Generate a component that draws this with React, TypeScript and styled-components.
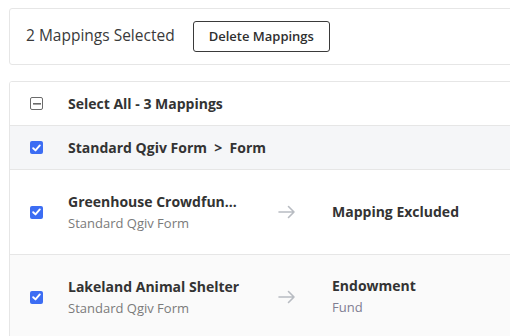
import styled, { createGlobalStyle } from 'styled-components'

const GlobalStyle = createGlobalStyle`
  html, body {
    margin: 0;
    padding: 0;
    background: #ffffff;
    overflow: hidden;
  }
  body {
    font-family: 'Open Sans', Lato, sans-serif;
    color: #333333;
  }
`

const Page = styled.div`
  display: flex;
  flex-direction: column;
  gap: 16px;
  padding: 8px 0 0 9px;
  width: 540px;
`

const Card = styled.div`
  border: 1px solid #e6e6e6;
  border-radius: 3px;
  background: #ffffff;
  overflow: hidden;
`

const Toolbar = styled(Card)`
  display: flex;
  align-items: center;
  gap: 18px;
  height: 55px;
  padding: 0 16px;
`

const SelectedCount = styled.span`
  font-size: 15.5px;
  color: #3a3a3a;
  margin-top: -3px;
`

const Button = styled.button`
  font-family: 'Open Sans', Lato, sans-serif;
  font-size: 13px;
  font-weight: 600;
  color: #2f2f2f;
  background: #ffffff;
  border: 1px solid #3a3a3a;
  border-radius: 3px;
  height: 31px;
  padding: 0 15px;
  margin-top: -1px;
`

const Row = styled.div<{ $bg?: string; $height: number }>`
  display: flex;
  align-items: center;
  height: ${(p) => p.$height}px;
  padding-left: 20px;
  background: ${(p) => p.$bg || '#ffffff'};
  border-bottom: 1px solid #e6e6e6;
  &:last-child {
    border-bottom: none;
  }
`

const Box = styled.span<{ $checked?: boolean }>`
  flex: none;
  width: 13px;
  height: 13px;
  box-sizing: border-box;
  border-radius: 2px;
  display: flex;
  align-items: center;
  justify-content: center;
  margin-right: 25px;
  background: ${(p) => (p.$checked ? '#3c6df3' : '#ffffff')};
  border: ${(p) => (p.$checked ? 'none' : '1.4px solid #6b6b6b')};
`

const Heading = styled.span`
  font-size: 14px;
  font-weight: 700;
  color: #333333;
  white-space: pre;
`

const Source = styled.div`
  width: 172px;
  display: flex;
  flex-direction: column;
  gap: 3px;
`

const Title = styled.div`
  font-size: 14px;
  font-weight: 700;
  color: #333333;
  white-space: nowrap;
`

const Sub = styled.div<{ $tint?: string }>`
  font-size: 13px;
  color: ${(p) => p.$tint || '#7a7a7a'};
`

const Arrow = styled.svg`
  flex: none;
  margin: 0 36px 0 38px;
`

const Target = styled.div`
  display: flex;
  flex-direction: column;
  gap: 3px;
  margin-top: -2px;
`

function Check({ checked }: { checked?: boolean }) {
  return (
    <Box $checked={checked}>
      {checked ? (
        <svg width="9" height="8" viewBox="0 0 9 8">
          <path d="M1.2 4.2 L3.5 6.4 L7.8 1.4" fill="none" stroke="#ffffff" strokeWidth="1.9" strokeLinecap="round" strokeLinejoin="round" />
        </svg>
      ) : (
        <svg width="8" height="2" viewBox="0 0 8 2">
          <rect x="0" y="0" width="8" height="1.6" fill="#6b6b6b" />
        </svg>
      )}
    </Box>
  )
}

function RightArrow() {
  return (
    <Arrow width="18" height="14" viewBox="0 0 18 14">
      <path d="M1 7 H16 M10.5 1.5 L16 7 L10.5 12.5" fill="none" stroke="#b8bcc2" strokeWidth="1.6" strokeLinecap="round" strokeLinejoin="round" />
    </Arrow>
  )
}

const mappings = [
  { title: 'Greenhouse Crowdfun...', source: 'Standard Qgiv Form', target: 'Mapping Excluded', targetSub: '', bg: '#ffffff' },
  { title: 'Lakeland Animal Shelter', source: 'Standard Qgiv Form', target: 'Endowment', targetSub: 'Fund', bg: '#fafafa' }
]

export default function App() {
  return (
    <>
      <GlobalStyle />
      <Page>
        <Toolbar>
          <SelectedCount>2 Mappings Selected</SelectedCount>
          <Button>Delete Mappings</Button>
        </Toolbar>
        <Card>
          <Row $height={43}>
            <Check />
            <Heading>Select All - 3 Mappings</Heading>
          </Row>
          <Row $height={43} $bg="#f5f6f8">
            <Check checked />
            <Heading>{'Standard Qgiv Form  >  Form'}</Heading>
          </Row>
          {mappings.map((m) => (
            <Row key={m.title} $height={84} $bg={m.bg}>
              <Check checked />
              <Source>
                <Title>{m.title}</Title>
                <Sub>{m.source}</Sub>
              </Source>
              <RightArrow />
              <Target>
                <Title>{m.target}</Title>
                {m.targetSub && <Sub $tint="#7f7d92">{m.targetSub}</Sub>}
              </Target>
            </Row>
          ))}
        </Card>
      </Page>
    </>
  )
}
